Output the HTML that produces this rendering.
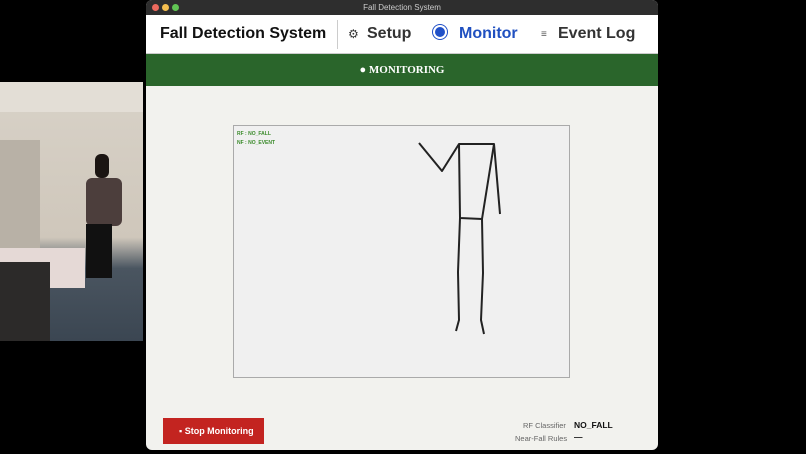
<!DOCTYPE html><html><head><style>
body{margin:0;width:806px;height:454px;background:#000;position:relative;overflow:hidden;font-family:"Liberation Sans",sans-serif}
.a{position:absolute}
</style></head><body>
<div class="a" style="left:0;top:82px;width:143px;height:259px;background:linear-gradient(#d8d2c8,#cfc7bb 60%,#4a5560 72%,#3b4652)"></div>
<div class="a" style="left:0;top:82px;width:143px;height:30px;background:#e3ded6"></div>
<div class="a" style="left:0;top:140px;width:40px;height:120px;background:#b8b1a6"></div>
<div class="a" style="left:0;top:248px;width:85px;height:40px;background:#e5d9d6"></div>
<div class="a" style="left:0;top:262px;width:50px;height:79px;background:#2c2a29"></div>
<div class="a" style="left:86px;top:178px;width:36px;height:48px;background:#4c3e3c;border-radius:6px"></div>
<div class="a" style="left:86px;top:224px;width:26px;height:54px;background:#111"></div>
<div class="a" style="left:95px;top:154px;width:14px;height:24px;background:#1b1512;border-radius:6px"></div>
<div class="a" style="left:146px;top:0;width:512px;height:450px;background:#f2f2ee;border-radius:6px;overflow:hidden">
<div class="a" style="left:0;top:0;width:512px;height:15px;background:#2e2e2e;color:#ccc;font-size:8px;text-align:center;line-height:15px">Fall Detection System</div>
<div class="a" style="left:6px;top:4px;width:7px;height:7px;border-radius:50%;background:#ed6a5e"></div>
<div class="a" style="left:16px;top:4px;width:7px;height:7px;border-radius:50%;background:#f5bf4f"></div>
<div class="a" style="left:26px;top:4px;width:7px;height:7px;border-radius:50%;background:#61c554"></div>
<div class="a" style="left:0;top:15px;width:512px;height:38px;background:#fff;border-bottom:1px solid #ccc"></div>
<div class="a" style="left:14px;top:25px;font-size:16px;font-weight:bold;color:#111">Fall Detection System</div>
<div class="a" style="left:191px;top:20px;width:1px;height:29px;background:#ccc"></div>
<div class="a" style="left:202px;top:27px;font-size:12px;color:#333">⚙</div>
<div class="a" style="left:221px;top:25px;font-size:16px;font-weight:bold;color:#333">Setup</div>
<div class="a" style="left:289px;top:27px;width:10px;height:10px;border-radius:50%;background:#2050c8;box-shadow:0 0 0 2px #fff,0 0 0 3px #2050c8"></div>
<div class="a" style="left:313px;top:25px;font-size:16px;font-weight:bold;color:#2050c0">Monitor</div>
<div class="a" style="left:395px;top:29px;font-size:10px;color:#555">≡</div>
<div class="a" style="left:412px;top:25px;font-size:16px;font-weight:bold;color:#333">Event Log</div>
<div class="a" style="left:0;top:54px;width:512px;height:32px;background:#2a652b;color:#fff;font:bold 11px 'Liberation Serif',serif;text-align:center;line-height:33px">● MONITORING</div>
<div class="a" style="left:87px;top:125px;width:335px;height:251px;background:#f0f0f0;border:1px solid #aaa"></div>
<div class="a" style="left:91px;top:130px;font-size:5px;color:#3a8a2a;font-weight:bold;line-height:9px">RF : NO_FALL<br>NF : NO_EVENT</div>
<div class="a" style="left:17px;top:418px;width:101px;height:26px;background:#c32420;color:#fff;font-size:9px;font-weight:bold;line-height:27px;text-indent:16px">▪ Stop Monitoring</div>
<div class="a" style="left:377px;top:421px;font-size:7.5px;color:#666">RF Classifier</div>
<div class="a" style="left:428px;top:420px;font-size:8.5px;font-weight:bold;color:#111">NO_FALL</div>
<div class="a" style="left:369px;top:434px;font-size:7.5px;color:#666">Near-Fall Rules</div>
<div class="a" style="left:428px;top:432px;font-size:8.5px;font-weight:bold;color:#111">—</div>
</div>
<svg class="a" style="left:0;top:0" width="806" height="454"><g stroke="#222" stroke-width="2" fill="none" stroke-linejoin="round">
<polyline points="419,143 442,171 459,144 494,144 500,214"/>
<polyline points="459,144 460,218 482,219 494,144"/>
<polyline points="460,218 458,272 459,320 456,331"/>
<polyline points="482,219 483,273 481,320 484,334"/>
</g></svg>
</body></html>
